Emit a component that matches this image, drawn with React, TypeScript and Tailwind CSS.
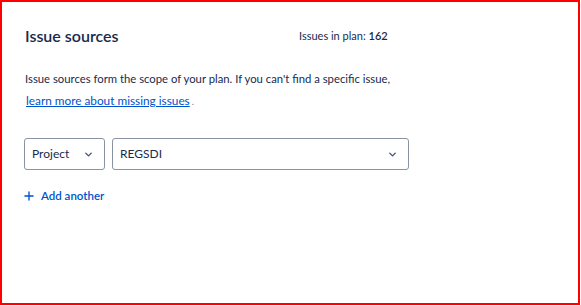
import { ChevronDown, Plus } from "lucide-react";

function Select({ label, className }: { label: string; className: string }) {
  return (
    <div
      className={`flex h-[32px] items-center justify-between rounded-[3px] border border-[#8993a4] bg-white pl-[7px] pr-[10px] text-[12px] text-[#172b4d] ${className}`}
    >
      <span>{label}</span>
      <ChevronDown size={11} strokeWidth={3} className="text-[#42526e]" />
    </div>
  );
}

export default function App() {
  return (
    <div
      className="h-[305px] w-[580px] border-2 border-[#ff0000] bg-white"
      style={{ fontFamily: 'Lato, "Noto Sans", sans-serif' }}
    >
      <div className="px-[22px] pt-[24px]">
        <div className="flex items-center">
          <h2 className="w-[275px] pl-[1px] text-[16px] font-semibold leading-[20px] text-[#172b4d]">
            Issue sources
          </h2>
          <div className="text-[11px] text-[#172b4d]">
            Issues in plan: <span className="font-semibold">162</span>
          </div>
        </div>

        <p className="mt-[22px] pl-[1px] text-[11.3px] leading-[22px] text-[#172b4d]">
          Issue sources form the scope of your plan. If you can't find a specific issue,
        </p>
        <p className="pl-[2px] text-[11.8px] leading-[22px] text-[#6b778c]">
          <a className="text-[#0052cc] underline" href="#">
            learn more about missing issues
          </a>
          <span className="ml-[2px] text-[9px]">.</span>
        </p>

        <div className="mt-[25px] flex gap-[7px]">
          <Select label="Project" className="w-[81px]" />
          <Select label="REGSDI" className="w-[297px]" />
        </div>

        <div className="mt-[17px] flex items-center gap-[5px] text-[11.5px] font-semibold text-[#0052cc]">
          <Plus size={14} strokeWidth={2.3} className="-ml-[2px]" />
          <span>Add another</span>
        </div>
      </div>
    </div>
  );
}
